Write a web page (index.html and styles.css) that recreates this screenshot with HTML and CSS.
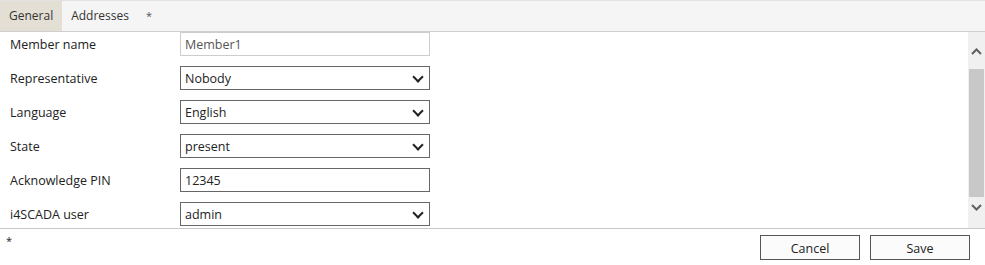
FILE: index.html
```html
<!DOCTYPE html>
<html lang="en">
<head>
    <meta charset="UTF-8">
    <title>Member</title>
    <link rel="stylesheet" href="styles.css">
</head>
<body>
    <div class="tab-bar">
        <div class="tab active">General</div>
        <div class="tab">Addresses</div>
        <div class="tab star">*</div>
    </div>

    <div class="content">
        <div class="form">
            <label>Member name</label>
            <div class="field readonly">Member1</div>

            <label>Representative</label>
            <div class="field select">Nobody</div>

            <label>Language</label>
            <div class="field select">English</div>

            <label>State</label>
            <div class="field select">present</div>

            <label>Acknowledge PIN</label>
            <div class="field">12345</div>

            <label>i4SCADA user</label>
            <div class="field select">admin</div>
        </div>

        <div class="scrollbar">
            <div class="scroll-btn up">
                <svg width="11" height="7" viewBox="0 0 11 7"><path d="M1 6 L5.5 1.5 L10 6" fill="none" stroke="#606060" stroke-width="2"/></svg>
            </div>
            <div class="scroll-thumb"></div>
            <div class="scroll-btn down">
                <svg width="11" height="7" viewBox="0 0 11 7"><path d="M1 1 L5.5 5.5 L10 1" fill="none" stroke="#606060" stroke-width="2"/></svg>
            </div>
        </div>
    </div>

    <div class="footer">
        <span class="required">*</span>
        <div class="buttons">
            <button class="btn">Cancel</button>
            <button class="btn">Save</button>
        </div>
    </div>
</body>
</html>
```

FILE: styles.css
```css
* {
    margin: 0;
    padding: 0;
    box-sizing: border-box;
}

body {
    width: 985px;
    height: 265px;
    font-family: "Open Sans", "Liberation Sans", sans-serif;
    font-size: 12px;
    color: #222;
    background: #fff;
    overflow: hidden;
}

.tab-bar {
    display: flex;
    height: 32px;
    background-color: #f5f5f5;
    border-top: 1px solid #e2e2e2;
    border-bottom: 1px solid #cfcfcf;
}

.tab {
    padding: 0 9px;
    line-height: 30px;
    color: #333;
}

.tab.star {
    padding-left: 8px;
    font-size: 11px;
    color: #555;
}

.tab.active {
    background-color: #e4dfd5;
}

.content {
    display: flex;
    height: 197px;
    border-bottom: 1px solid #c8c8c8;
}

.form {
    flex: 1;
    display: grid;
    grid-template-columns: 170px 250px;
    grid-auto-rows: 24px;
    row-gap: 10px;
    padding-left: 10px;
    align-items: center;
}

.form label {
    font-size: 12.5px;
    padding-top: 1px;
}

.field {
    height: 24px;
    border: 1px solid #666;
    padding: 0 4px;
    line-height: 23px;
    font-size: 12.5px;
    color: #222;
    position: relative;
}

.field.readonly {
    border-color: #cdcdcd;
    color: #555;
}

.field.select::after {
    content: "";
    position: absolute;
    right: 7px;
    top: 6px;
    width: 6px;
    height: 6px;
    border-right: 2px solid #222;
    border-bottom: 2px solid #222;
    transform: rotate(45deg);
}

.scrollbar {
    width: 17px;
    display: flex;
    flex-direction: column;
    background-color: #f0f0f0;
}

.scroll-btn {
    display: flex;
    justify-content: center;
}

.scroll-btn.up {
    height: 37px;
    padding-top: 16px;
}

.scroll-btn.down {
    flex: 1;
    padding-top: 7px;
}

.scroll-thumb {
    height: 128px;
    margin: 0 1px;
    background-color: #c8c8c8;
}

.footer {
    display: flex;
    justify-content: space-between;
    padding: 6px 15px 0 6px;
}

.required {
    font-size: 11px;
    line-height: 12px;
}

.buttons {
    display: flex;
    gap: 10px;
}

.btn {
    width: 100px;
    height: 25px;
    border: 1px solid #555;
    background-color: #fbfbfb;
    font-family: "Open Sans", "Liberation Sans", sans-serif;
    font-size: 12.5px;
    color: #222;
    padding-top: 1px;
}
```
